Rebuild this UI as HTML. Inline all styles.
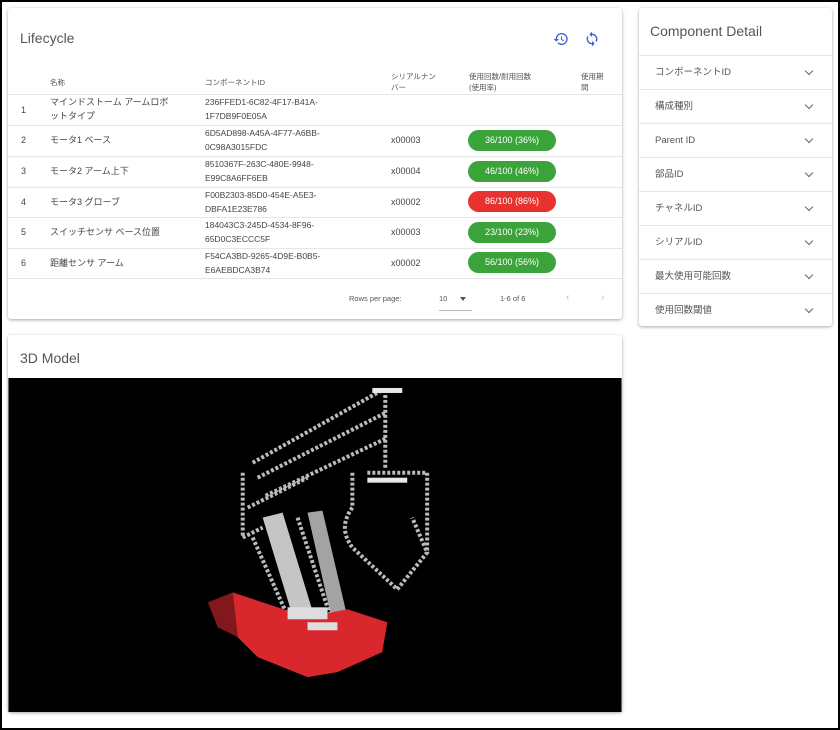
<!DOCTYPE html>
<html><head><meta charset="utf-8"><style>
*{box-sizing:border-box;margin:0;padding:0}
body{width:840px;height:730px;background:#fff;border:2px solid #000;position:relative;overflow:hidden;font-family:"Liberation Sans","Noto Sans CJK JP",sans-serif;color:#333}
.card{position:absolute;background:#fff;box-shadow:0 1px 3px rgba(0,0,0,.35);border-radius:3px}
.t{position:absolute;font-size:9px;color:#444;line-height:14px}
.h{position:absolute;font-size:7.5px;color:#555;line-height:11px}
.row{position:absolute;left:0;width:614px;border-top:1px solid #e6e6e6}
.pill{position:absolute;left:460px;width:88px;height:21px;border-radius:11px;background:#3aa43a;color:#fff;font-size:9px;text-align:center;line-height:21px}
.it{position:absolute;left:0;width:193px;height:34px;border-top:1px solid #e6e6e6;font-size:9.5px;color:#555;padding-left:16px;line-height:33px}
.it:after{content:"";position:absolute;right:20px;top:12px;width:5px;height:5px;border-right:1.5px solid #666;border-bottom:1.5px solid #666;transform:rotate(45deg)}
</style></head><body>
<div class="card" style="left:6px;top:6px;width:614px;height:311px">
<div style="position:absolute;left:12px;top:22px;font-size:14px;color:#555">Lifecycle</div>
<svg style="position:absolute;left:545px;top:23px" width="16" height="16" viewBox="0 0 24 24"><path d="M13 3a9 9 0 0 0-9 9H1l4 4 4-4H6a7 7 0 1 1 2.1 5l-1.4 1.4A9 9 0 1 0 13 3zm-1 5v5l4 2.5.8-1.3-3.3-2V8z" fill="#3a5fd9"/></svg>
<svg style="position:absolute;left:576px;top:23px" width="16" height="16" viewBox="0 0 24 24"><path d="M12 4V1L8 5l4 4V6a6 6 0 0 1 5.2 9l1.5 1.5A8 8 0 0 0 12 4zm0 14a6 6 0 0 1-5.2-9L5.3 7.5A8 8 0 0 0 12 20v3l4-4-4-4z" fill="#3a5fd9"/></svg>
<div class="h" style="left:42px;top:69px">名称</div>
<div class="h" style="left:197px;top:69px">コンポーネントID</div>
<div class="h" style="left:383px;top:63px">シリアルナン<br>バー</div>
<div class="h" style="left:461px;top:63px">使用回数/耐用回数<br>(使用率)</div>
<div class="h" style="left:573px;top:63px">使用期<br>間</div>
<div class="row" style="top:86px"></div>
<div class="t" style="left:13px;top:95px">1</div><div class="t" style="left:42px;top:87px">マインドストーム アームロボ<br>ットタイプ</div><div class="t" style="left:197px;top:87px;font-size:8.5px">236FFED1-6C82-4F17-B41A-<br>1F7DB9F0E05A</div>
<div class="row" style="top:117px"></div>
<div class="t" style="left:13px;top:125px">2</div><div class="t" style="left:42px;top:125px">モータ1 ベース</div><div class="t" style="left:197px;top:118px;font-size:8.5px">6D5AD898-A45A-4F77-A6BB-<br>0C98A3015FDC</div><div class="t" style="left:383px;top:125px">x00003</div><div class="pill" style="top:122px">36/100 (36%)</div>
<div class="row" style="top:148px"></div>
<div class="t" style="left:13px;top:156px">3</div><div class="t" style="left:42px;top:156px">モータ2 アーム上下</div><div class="t" style="left:197px;top:149px;font-size:8.5px">8510367F-263C-480E-9948-<br>E99C8A6FF6EB</div><div class="t" style="left:383px;top:156px">x00004</div><div class="pill" style="top:153px">46/100 (46%)</div>
<div class="row" style="top:179px"></div>
<div class="t" style="left:13px;top:187px">4</div><div class="t" style="left:42px;top:187px">モータ3 グローブ</div><div class="t" style="left:197px;top:180px;font-size:8.5px">F00B2303-85D0-454E-A5E3-<br>DBFA1E23E786</div><div class="t" style="left:383px;top:187px">x00002</div><div class="pill" style="top:183px;background:#e8322f">86/100 (86%)</div>
<div class="row" style="top:209px"></div>
<div class="t" style="left:13px;top:217px">5</div><div class="t" style="left:42px;top:217px">スイッチセンサ ベース位置</div><div class="t" style="left:197px;top:210px;font-size:8.5px">184043C3-245D-4534-8F96-<br>65D0C3ECCC5F</div><div class="t" style="left:383px;top:217px">x00003</div><div class="pill" style="top:214px">23/100 (23%)</div>
<div class="row" style="top:240px"></div>
<div class="t" style="left:13px;top:248px">6</div><div class="t" style="left:42px;top:248px">距離センサ アーム</div><div class="t" style="left:197px;top:241px;font-size:8.5px">F54CA3BD-9265-4D9E-B0B5-<br>E6AEBDCA3B74</div><div class="t" style="left:383px;top:248px">x00002</div><div class="pill" style="top:244px">56/100 (56%)</div>
<div class="row" style="top:270px"></div>
<div class="h" style="left:341px;top:285px">Rows per page:</div>
<div class="h" style="left:431px;top:285px">10</div>
<div style="position:absolute;left:452px;top:289px;border:3px solid transparent;border-top:4px solid #555"></div>
<div style="position:absolute;left:431px;top:302px;width:33px;border-top:1px solid #bbb"></div>
<div class="h" style="left:492px;top:285px">1-6 of 6</div>
<div class="h" style="left:558px;top:284px;color:#bbb;font-size:10px">‹</div>
<div class="h" style="left:593px;top:284px;color:#bbb;font-size:10px">›</div>
</div>
<div class="card" style="left:637px;top:6px;width:193px;height:318px">
<div style="position:absolute;left:11px;top:15px;font-size:14px;color:#555">Component Detail</div>
<div class="it" style="top:47px">コンポーネントID</div>
<div class="it" style="top:81px">構成種別</div>
<div class="it" style="top:115px">Parent ID</div>
<div class="it" style="top:149px">部品ID</div>
<div class="it" style="top:183px">チャネルID</div>
<div class="it" style="top:217px">シリアルID</div>
<div class="it" style="top:251px">最大使用可能回数</div>
<div class="it" style="top:285px">使用回数閾値</div>
</div>
<div class="card" style="left:6px;top:333px;width:614px;height:377px">
<div style="position:absolute;left:12px;top:15px;font-size:14px;color:#555">3D Model</div>
<svg style="position:absolute;left:0;top:43px" width="614" height="334" viewBox="0 0 615 335">
<rect width="615" height="335" fill="#000"/>
<g fill="none" stroke="#bbb" stroke-width="4" stroke-dasharray="3 2">
<path d="M245 85 L375 12 M250 100 L378 35 M258 118 L380 60 M240 130 L300 100"/>
<path d="M378 12 V92 M360 95 H420 V175 M345 95 V130 M345 130 Q330 150 345 170 L390 212 L420 175 L405 140"/>
<path d="M235 95 V160 L255 150 M245 160 L285 250 M290 140 L330 260"/>
</g>
<g fill="#e8e8e8"><path d="M255 140 L275 135 L310 250 L290 255Z" opacity=".85"/><path d="M300 135 L315 133 L340 240 L325 245Z" opacity=".7"/><rect x="365" y="10" width="30" height="5"/><rect x="360" y="100" width="40" height="5"/></g>
<g fill="#d8282e"><path d="M225 215 L300 240 L340 232 L380 245 L375 275 L330 295 L300 300 L250 280 L230 260 Z"/><path d="M200 225 L225 215 L230 260 L210 250Z" opacity=".6"/></g>
<g fill="#ddd"><rect x="280" y="230" width="40" height="12"/><rect x="300" y="245" width="30" height="8"/></g>
</svg>
</div>
</body></html>
